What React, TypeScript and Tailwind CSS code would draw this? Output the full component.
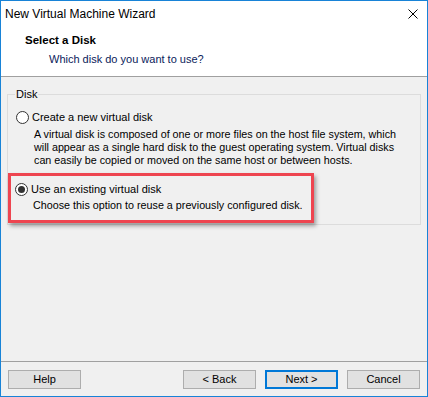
function Radio({ checked }: { checked?: boolean }) {
  return (
    <span className="w-[13px] h-[13px] rounded-full border border-[#333333] bg-white flex items-center justify-center shrink-0">
      {checked && <span className="w-[7px] h-[7px] rounded-full bg-[#333333]" />}
    </span>
  );
}

function Button({ label, primary }: { label: string; primary?: boolean }) {
  return (
    <button
      className={`w-[73px] h-[19px] bg-[#e1e1e1] text-[11px] leading-none text-black flex items-center justify-center ${
        primary ? "border-2 border-[#0078d7]" : "border border-[#adadad]"
      }`}
    >
      {label}
    </button>
  );
}

export default function App() {
  return (
    <div
      className="w-[428px] h-[397px] border border-[#1883d7] bg-[#f0f0f0] flex flex-col text-black whitespace-nowrap"
      style={{ fontFamily: '"Liberation Sans", Arial, sans-serif' }}
    >
      {/* Header */}
      <div className="bg-white h-[76px] border-b border-[#a0a0a0] flex flex-col shrink-0">
        <div className="h-[25px] flex items-center justify-between pl-[4px] pr-[9px]">
          <span className="text-[12px] text-black">New Virtual Machine Wizard</span>
          <svg width="10" height="10" viewBox="0 0 10 10" className="mt-[1px]">
            <path d="M0.5 0.5 L9.5 9.5 M9.5 0.5 L0.5 9.5" stroke="#000" strokeWidth="1" />
          </svg>
        </div>
        <div className="pl-[24px] mt-[6px] text-[11.5px] font-bold leading-[16px]">Select a Disk</div>
        <div className="pl-[48px] mt-[3px] text-[11px] leading-[16px] text-[#0a1a5a]">
          Which disk do you want to use?
        </div>
      </div>

      {/* Body */}
      <div className="flex-1 px-[6px] pt-[10px]">
        <fieldset className="border border-[#dcdcdc] h-[138px]">
          <legend className="ml-[7px] px-[1px] text-[11px] leading-[14px] text-black">Disk</legend>
          <div className="flex flex-col">
            <div className="flex items-center gap-[3px] pl-[8px] mt-[9px] h-[14px]">
              <Radio />
              <span className="text-[11px]">Create a new virtual disk</span>
            </div>
            <div className="pl-[26px] mt-[4px] text-[10.75px] leading-[13px] text-black">
              A virtual disk is composed of one or more files on the host file system, which
              <br />
              will appear as a single hard disk to the guest operating system. Virtual disks
              <br />
              can easily be copied or moved on the same host or between hosts.
            </div>
            <div className="mt-[6px] w-[306px] h-[50px] border-[3px] border-[#ee4550] shadow-[2px_3px_4px_rgba(0,0,0,0.35)] flex flex-col">
              <div className="flex items-center gap-[3px] pl-[4px] mt-[6px] h-[14px]">
                <Radio checked />
                <span className="text-[11px]">Use an existing virtual disk</span>
              </div>
              <div className="pl-[22px] mt-[2px] text-[10.75px] leading-[14px]">
                Choose this option to reuse a previously configured disk.
              </div>
            </div>
          </div>
        </fieldset>
      </div>

      {/* Footer */}
      <div className="h-[35px] border-t border-[#a0a0a0] flex items-start pt-[8px] px-[7px] shrink-0">
        <Button label="Help" />
        <div className="flex-1" />
        <div className="flex gap-[9px]">
          <Button label="< Back" />
          <Button label="Next >" primary />
          <Button label="Cancel" />
        </div>
      </div>
    </div>
  );
}
